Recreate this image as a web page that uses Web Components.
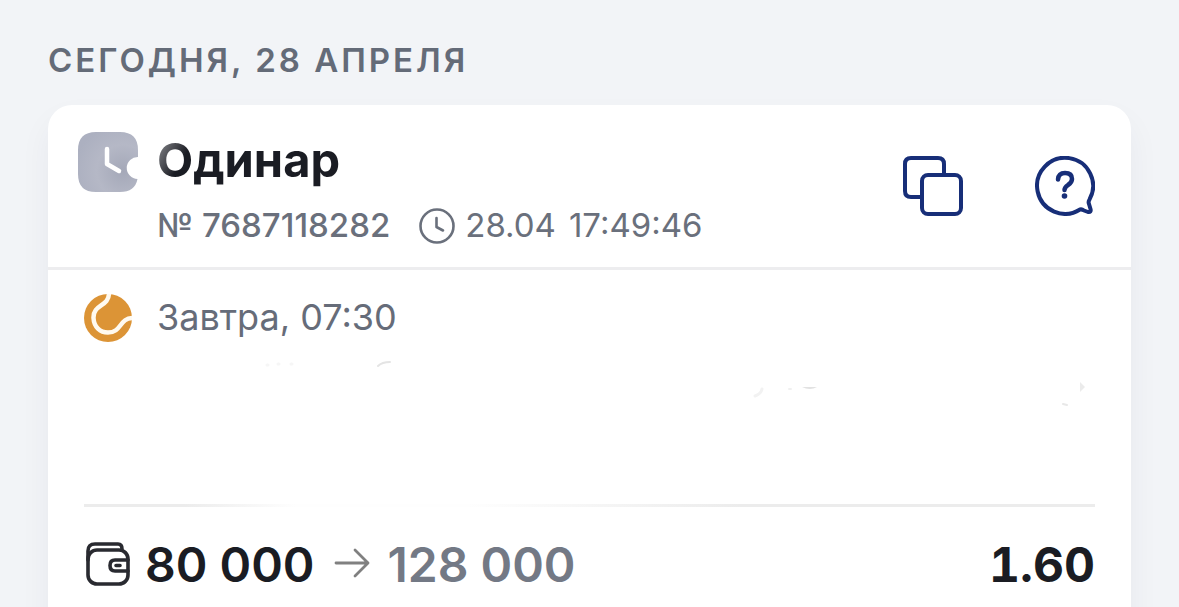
<!DOCTYPE html>
<html lang="ru">
<head>
<meta charset="utf-8">
<meta name="viewport" content="width=device-width, initial-scale=1">
<title>История ставок</title>
<style>
    body {
        margin: 0;
        background: #f2f4f7;
        font-family: Inter, "Liberation Sans", sans-serif;
        color: #1a1c23;
        overflow: hidden;
    }
</style>
</head>
<body>
<bet-day>
    <span slot="date">Сегодня, 28 апреля</span>
    <bet-card>
        <bet-header slot="header" number="7687118282" date="28.04" time="17:49:46">Одинар</bet-header>
        <bet-event>Завтра, 07:30</bet-event>
        <bet-total slot="footer" stake="80 000" win="128 000" odds="1.60"></bet-total>
    </bet-card>
</bet-day>

<script>
class BetDay extends HTMLElement {
    constructor() {
        super();
        this.attachShadow({ mode: "open" }).innerHTML = `
            <style>
                :host {
                    display: block;
                    padding: 40px 48px 0;
                }

                h2 {
                    margin: 0 0 25px;
                    font-size: 33px;
                    line-height: 40px;
                    font-weight: 600;
                    letter-spacing: 3px;
                    text-transform: uppercase;
                    white-space: nowrap;
                    color: #646b78;
                }
            </style>
            <h2><slot name="date"></slot></h2>
            <slot></slot>`;
    }
}

class BetCard extends HTMLElement {
    constructor() {
        super();
        this.attachShadow({ mode: "open" }).innerHTML = `
            <style>
                :host {
                    display: block;
                    background: #fff;
                    border-radius: 24px 24px 0 0;
                    box-shadow: 0 16px 32px rgba(30, 40, 80, 0.05);
                }

                header {
                    border-bottom: 3px solid #ededef;
                }

                /* The rule over the totals fades out in the middle */
                footer {
                    margin: 0 36px;
                    border-top: 3px solid;
                    border-image: linear-gradient(90deg, #ececec 10%, #fefefe 21%, #fefefe 38%, #ececec 65%) 1;
                }
            </style>
            <header><slot name="header"></slot></header>
            <slot></slot>
            <footer><slot name="footer"></slot></footer>`;
    }
}

class BetHeader extends HTMLElement {
    connectedCallback() {
        this.attachShadow({ mode: "open" }).innerHTML = `
            <style>
                :host {
                    display: flex;
                    align-items: flex-start;
                    justify-content: space-between;
                    padding: 27px 36px 18px 30px;
                }

                svg {
                    display: block;
                    flex: none;
                }

                .info {
                    display: flex;
                    gap: 19px;
                }

                h3 {
                    margin: 0 0 14px;
                    font-size: 47px;
                    line-height: 56px;
                    font-weight: 700;
                    background: linear-gradient(120deg, #85868a 6px, #1a1c23 36px);
                    background-clip: text;
                    -webkit-background-clip: text;
                    color: transparent;
                }

                .meta {
                    display: flex;
                    align-items: center;
                    font-size: 33px;
                    line-height: 47px;
                    white-space: nowrap;
                    color: #6a707c;
                }

                .number {
                    font-weight: 500;
                    margin-right: 29px;
                }

                time {
                    display: flex;
                    gap: 13px;
                    margin-left: 10px;
                }

                .actions {
                    display: flex;
                    gap: 72px;
                    padding-top: 24px;
                }

                button {
                    padding: 0;
                    border: 0;
                    background: none;
                    cursor: pointer;
                }
            </style>
            <div class="info">
                <svg width="60" height="60" viewBox="0 0 60 60" aria-hidden="true">
                    <defs>
                        <radialGradient id="shade" cx="0.75" cy="0.65" r="0.8">
                            <stop offset="0" stop-color="#a4a8b8"/>
                            <stop offset="0.55" stop-color="#b5b8c6"/>
                            <stop offset="1" stop-color="#acb0c0"/>
                        </radialGradient>
                    </defs>
                    <path fill="url(#shade)" d="M18 0H42Q60 0 60 18V25A11 11 0 1 0 59.500 47Q57 60 42 60H18Q0 60 0 42V18Q0 0 18 0Z"/>
                    <path d="M29 17V32L41 39" fill="none" stroke="#fff" stroke-width="4.500" stroke-linecap="round" stroke-linejoin="round"/>
                </svg>
                <div>
                    <h3><slot></slot></h3>
                    <div class="meta">
                        <span class="number">№ ${this.getAttribute("number")}</span>
                        <svg width="36" height="36" viewBox="0 0 36 36" fill="none" stroke="#6a707c" stroke-width="2.600" stroke-linecap="round" stroke-linejoin="round" aria-hidden="true">
                            <circle cx="18" cy="18" r="16.500"/>
                            <path d="M17.500 10V19L24 22.500"/>
                        </svg>
                        <time><span>${this.getAttribute("date")}</span> <span>${this.getAttribute("time")}</span></time>
                    </div>
                </div>
            </div>
            <div class="actions">
                <button type="button" aria-label="Скопировать">
                    <svg width="60" height="60" viewBox="0 0 60 60" fill="none" stroke="#172e78" stroke-width="4" stroke-linejoin="round">
                        <path d="M18 41H8Q2 41 2 35V8Q2 2 8 2H35Q41 2 41 8V18"/>
                        <rect x="19" y="19" width="39" height="39" rx="6"/>
                    </svg>
                </button>
                <button type="button" aria-label="Помощь">
                    <svg width="60" height="60" viewBox="0 0 60 60" fill="none" stroke="#172e78" stroke-width="4" stroke-linecap="round" stroke-linejoin="round">
                        <path d="M45 53.500A28 28 0 1 1 54.500 43.500Q53 46 54 48L55.500 53Q56.500 56.500 53 56L49 54.500Q47 53 45 53.500Z"/>
                        <path d="M23 23.500Q23.500 17 30 17Q37 17 37 23Q37 26.500 33 29Q29.500 31.500 29.500 34" stroke-width="4.500"/>
                        <circle cx="29.500" cy="40" r="2.800" fill="#172e78" stroke="none"/>
                    </svg>
                </button>
            </div>`;
    }
}

class BetEvent extends HTMLElement {
    constructor() {
        super();
        this.attachShadow({ mode: "open" }).innerHTML = `
            <style>
                :host {
                    display: block;
                    padding: 24px 36px 0;
                }

                .when {
                    display: flex;
                    align-items: flex-start;
                    gap: 25px;
                    font-size: 36px;
                    line-height: 46px;
                    color: #666c79;
                }

                svg {
                    display: block;
                    flex: none;
                }

                .teams {
                    height: 162px;
                }
            </style>
            <div class="when">
                <svg width="48" height="48" viewBox="0 0 48 48" aria-hidden="true">
                    <circle cx="24" cy="24" r="24" fill="#dc9436"/>
                    <path d="M25 -1C25 13 9 10 9.500 24C10 33 16 38.500 24 38.500C38 38.500 35 24 49 24" fill="none" stroke="#fffaf0" stroke-width="4.500"/>
                </svg>
                <span><slot></slot></span>
            </div>
            <div class="teams">
                <svg width="100%" height="90" fill="none" stroke-linecap="round" aria-hidden="true">
                    <path d="M183 23h1M194 22h1M207 22h1" stroke="#f6f6f6" stroke-width="3"/>
                    <path d="M294 24Q298 20 306 20" stroke="#e4e4e4" stroke-width="2"/>
                    <path d="M671 54Q677 52 678 47" stroke="#f2f2f2" stroke-width="3"/>
                    <path d="M705 47h2" stroke="#f0f0f0" stroke-width="2"/>
                    <path d="M718 45Q726 49 733 45Z" fill="#e2e2e2"/>
                    <path d="M996 40L1001 45L996 50Z" fill="#ebebeb"/>
                    <path d="M979 62L983 63" stroke="#e8e8e8" stroke-width="2"/>
                </svg>
            </div>`;
    }
}

class BetTotal extends HTMLElement {
    connectedCallback() {
        this.attachShadow({ mode: "open" }).innerHTML = `
            <style>
                :host {
                    display: flex;
                    align-items: center;
                    padding: 29px 0 40px;
                    font-size: 48px;
                    line-height: 58px;
                    font-weight: 600;
                    white-space: nowrap;
                }

                svg {
                    display: block;
                    flex: none;
                }

                .stake {
                    margin: 0 20px 0 13px;
                }

                .win {
                    margin-left: 17px;
                    color: #737985;
                }

                .odds {
                    margin-left: auto;
                    font-weight: 700;
                    font-variant-numeric: tabular-nums;
                }
            </style>
            <svg width="48" height="48" viewBox="0 0 48 48" fill="none" stroke="#292a30" stroke-width="3.600" stroke-linecap="round" stroke-linejoin="round" aria-hidden="true">
                <rect x="4" y="9" width="40" height="34" rx="9"/>
                <path d="M4 19V10Q4 3 11 3H34Q38 3 38 8"/>
                <path d="M44 19H31Q26 19 26 24.500Q26 30 31 30H44M32 24.500H36"/>
            </svg>
            <span class="stake">${this.getAttribute("stake")}</span>
            <svg width="36" height="36" viewBox="0 0 36 36" fill="none" stroke="#808080" stroke-width="2.800" stroke-linecap="round" stroke-linejoin="round" aria-hidden="true">
                <path d="M2 16H34M21 3L34 16L21 29"/>
            </svg>
            <span class="win">${this.getAttribute("win")}</span>
            <span class="odds">${this.getAttribute("odds")}</span>`;
    }
}

customElements.define("bet-day", BetDay);
customElements.define("bet-card", BetCard);
customElements.define("bet-header", BetHeader);
customElements.define("bet-event", BetEvent);
customElements.define("bet-total", BetTotal);
</script>
</body>
</html>
